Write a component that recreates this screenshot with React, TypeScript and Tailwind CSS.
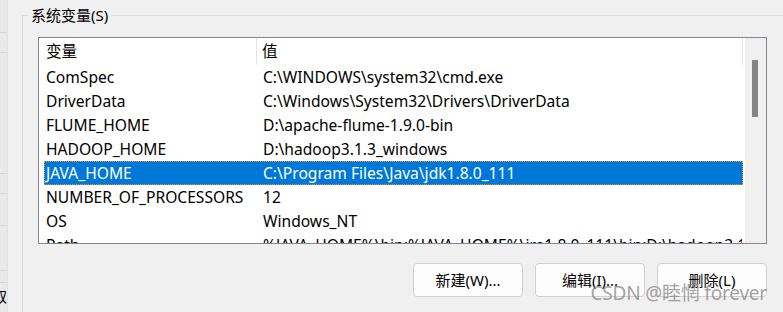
import React from "react";

const rows: { name: string; value: string; selected?: boolean }[] = [
  { name: "ComSpec", value: "C:\\WINDOWS\\system32\\cmd.exe" },
  { name: "DriverData", value: "C:\\Windows\\System32\\Drivers\\DriverData" },
  { name: "FLUME_HOME", value: "D:\\apache-flume-1.9.0-bin" },
  { name: "HADOOP_HOME", value: "D:\\hadoop3.1.3_windows" },
  { name: "JAVA_HOME", value: "C:\\Program Files\\Java\\jdk1.8.0_111", selected: true },
  { name: "NUMBER_OF_PROCESSORS", value: "12" },
  { name: "OS", value: "Windows_NT" },
  {
    name: "Path",
    value: "%JAVA_HOME%\\bin;%JAVA_HOME%\\jre1.8.0_111\\bin;D:\\hadoop3.1.3_windows\\bin;C:\\WINDOWS",
  },
];

const LeftStrip = () => (
  <div className="w-[8px] shrink-0 h-full bg-[#e9e9e9] border-r border-[#e2e2e2] flex flex-col overflow-hidden">
    <div className="h-[33px] shrink-0 border-b border-[#d4d4d4]" />
    <div className="h-[20px] shrink-0 border-b border-[#d4d4d4]" />
    <div className="h-[121px] shrink-0 border-b border-[#d4d4d4]" />
    <div className="h-[20px] shrink-0 border-b border-[#d4d4d4]" />
    <div className="h-[32px] shrink-0 border-b border-[#d4d4d4]" />
    <div className="h-[45px] shrink-0 border-b border-[#d4d4d4]" />
    <div className="h-[12px] shrink-0 border-b border-[#d4d4d4]" />
    <div className="text-[15px] leading-[20px] -ml-[8px] mt-[3px] text-black">取</div>
  </div>
);

const Button = ({ label }: { label: string }) => (
  <button className="w-[110px] h-[34px] bg-[#fdfdfd] border border-[#d0d0d0] rounded-[4px] text-[15px] text-black flex items-center justify-center">
    {label}
  </button>
);

export default function App() {
  return (
    <div
      className="w-[783px] h-[312px] bg-[#f0f0f0] flex overflow-hidden relative text-black"
      style={{ fontFamily: '"Noto Sans", "Noto Sans CJK SC", sans-serif' }}
    >
      <LeftStrip />
      <div className="flex-1 pl-[14px] pt-[5px]">
        <fieldset className="border border-[#dcdcdc] w-[800px] h-[400px] pl-[5px] m-0">
          <legend className="px-[3px] text-[15px] leading-[20px]">系统变量(S)</legend>
          <div className="ml-[10px] mt-[12px] w-[729px]">
            <div className="h-[207px] border border-[#828790] bg-white flex">
              <div className="flex-1 overflow-hidden text-[15.6px]">
                <div className="h-[27px] flex items-center">
                  <div className="w-[218px] pl-[7px] pt-[1px] h-full flex items-center border-r border-[#e5e5e5]">变量</div>
                  <div className="w-[486px] pl-[5px] pt-[1px] h-full flex items-center border-r border-[#e5e5e5]">值</div>
                </div>
                {rows.map((r) => (
                  <div
                    key={r.name}
                    className={
                      r.selected
                        ? "ml-[5px] w-[699px] h-[24px] pt-[2px] flex items-center bg-[#0078d7] text-white border border-dotted border-[#ff8a2a]"
                        : "ml-[5px] w-[699px] h-[24px] pt-[2px] flex items-center border border-transparent"
                    }
                  >
                    <div className="w-[213px] pl-[1px] whitespace-nowrap overflow-hidden">{r.name}</div>
                    <div className="flex-1 pl-[5px] whitespace-nowrap overflow-hidden">{r.value}</div>
                  </div>
                ))}
              </div>
              <div className="w-[21px] shrink-0 bg-[#f0f0f0] pl-[7px] pt-[22px]">
                <div className="w-[6px] h-[57px] bg-[#858585]" />
              </div>
            </div>
            <div className="mt-[19px] flex justify-end gap-[12px]">
              <Button label="新建(W)..." />
              <Button label="编辑(I)..." />
              <Button label="删除(L)" />
            </div>
          </div>
        </fieldset>
      </div>
      <div className="absolute right-[16px] bottom-[7px] text-[19px] leading-[24px] text-[#8a8a8a]/80 tracking-[-0.2px]">
        CSDN @睦惘 forever
      </div>
    </div>
  );
}
